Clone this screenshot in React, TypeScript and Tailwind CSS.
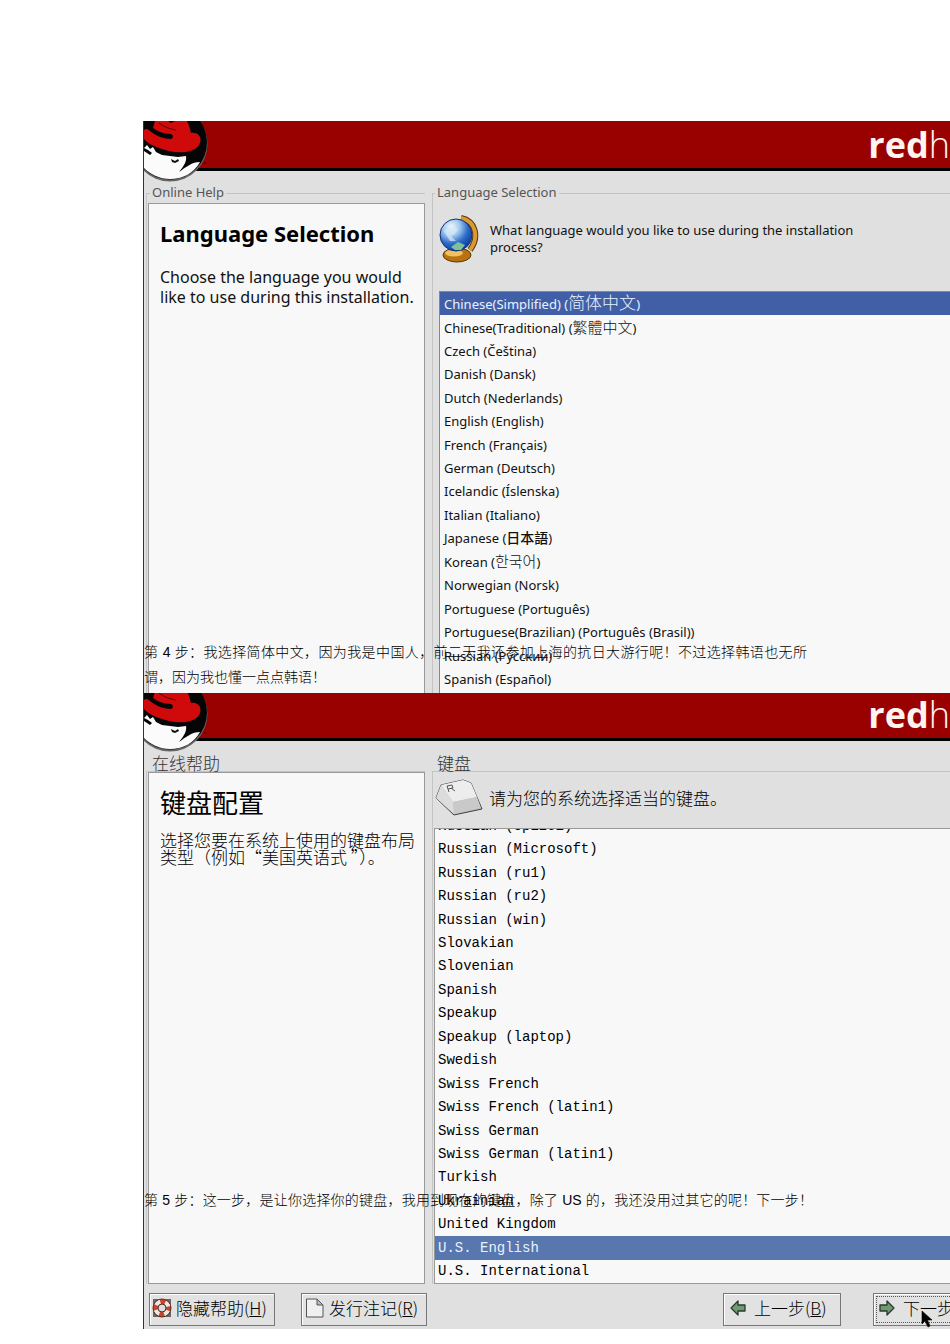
import React from "react";

const languages = [
  ["Chinese(Simplified) (", "简体中文", ")"],
  ["Chinese(Traditional) (", "繁體中文", ")"],
  ["Czech (Čeština)"],
  ["Danish (Dansk)"],
  ["Dutch (Nederlands)"],
  ["English (English)"],
  ["French (Français)"],
  ["German (Deutsch)"],
  ["Icelandic (Íslenska)"],
  ["Italian (Italiano)"],
  ["Japanese (", "日本語", ")"],
  ["Korean (", "한국어", ")"],
  ["Norwegian (Norsk)"],
  ["Portuguese (Português)"],
  ["Portuguese(Brazilian) (Português (Brasil))"],
  ["Russian (Русский)"],
  ["Spanish (Español)"],
];

const keyboards = [
  "Russian (cp1251)",
  "Russian (Microsoft)",
  "Russian (ru1)",
  "Russian (ru2)",
  "Russian (win)",
  "Slovakian",
  "Slovenian",
  "Spanish",
  "Speakup",
  "Speakup (laptop)",
  "Swedish",
  "Swiss French",
  "Swiss French (latin1)",
  "Swiss German",
  "Swiss German (latin1)",
  "Turkish",
  "Ukrainian",
  "United Kingdom",
  "U.S. English",
  "U.S. International",
];

function HatLogo() {
  return (
    <svg viewBox="0 0 66 62" className="h-[62px] w-[66px] shrink-0" aria-hidden="true">
      <circle cx="26" cy="23" r="37.500" fill="#666" />
      <circle cx="26" cy="21.500" r="37" fill="#050505" />
      <path d="M0 27 L3 24 L6 28 L9 26 L12 31 L18 34 L26 35 L34 36 L42 35 C43 40 40 45 35 51 C42 46 48 41 56 41 C50 52 39 58 26 58 C15 58 6 53 0 47Z" fill="#fbfbfb" />
      <path d="M0 27 L4 29 L8 32 L6 34 L0 30Z" fill="#050505" />
      <path d="M27 38 L31 40 L34 38 L35 40 L31 42 L28 41Z" fill="#111" />
      <path d="M0 9 C2 7 4 8 6 10 C12 15 20 18 27 18 C30 17 29 14 27 13 C20 13 13 10 9 7 L11 0 L24 0 L27 2 L31 0 L43 0 C45 4 46 8 47 12 C54 11 58 16 56 22 C53 31 38 33 25 30 C13 27 4 23 0 18Z" fill="#d00a0a" />
      <path d="M15 2 C20 6 26 8 32 9" fill="none" stroke="#5a0000" />
      <circle cx="61" cy="42" r="1" fill="#500" />
    </svg>
  );
}

function Banner() {
  return (
    <header className="flex h-full items-start justify-between border-b-[3px] border-black bg-[#990000]">
      <HatLogo />
      <div className="pt-[3px] font-['Open_Sans',sans-serif] text-[36px] leading-[42px] text-[#fff4f0]">
        <span className="font-bold">red</span>
        <span className="font-light">h</span>
      </div>
    </header>
  );
}

function Globe() {
  return (
    <svg viewBox="0 0 40 50" className="h-[50px] w-10 shrink-0" aria-hidden="true">
      <defs>
        <radialGradient id="sea" cx="0.35" cy="0.25" r="0.8">
          <stop offset="0" stopColor="#f2faff" />
          <stop offset="0.35" stopColor="#9cc6ee" />
          <stop offset="0.65" stopColor="#2d6cc8" />
          <stop offset="1" stopColor="#08389c" />
        </radialGradient>
      </defs>
      <path d="M22 4 C36 7 41 22 31 36" fill="none" stroke="#5a3505" strokeWidth="6" />
      <path d="M22 4 C36 7 41 22 31 36" fill="none" stroke="#d99a34" strokeWidth="4" />
      <ellipse cx="18" cy="41" rx="14" ry="7" fill="#b87310" stroke="#5a3505" />
      <ellipse cx="15" cy="39" rx="9" ry="3.5" fill="#f1c060" />
      <circle cx="17" cy="21" r="16" fill="url(#sea)" stroke="#12326e" />
      <path d="M5 17 L12 12 L19 15 L16 20 L12 22 L17 27 L11 27Z" fill="#d5ebf3" opacity="0.7" />
      <path d="M12 33 L19 28 L26 31 L22 36 L16 36Z" fill="#7cc296" />
    </svg>
  );
}

function KeyCap() {
  return (
    <svg viewBox="0 0 48 38" className="h-[38px] w-12 shrink-0" aria-hidden="true">
      <path d="M1 19 L6 6 L28 1 L36 4 L47 30 L19 36 Z" fill="#b5b5b5" stroke="#444" strokeLinejoin="round" />
      <path d="M6 6 L28 1 L36 4 L42 18 L18 23 Z" fill="#ededed" />
      <path d="M18 23 L42 18 L46 29 L19 35Z" fill="#c9c9c9" />
      <path d="M1 19 L6 6 L18 23 L19 35Z" fill="#dcdcdc" />
      <path d="M14 13 L12 7 L17 6 L18 9 L13 10 M16 9 L20 12" fill="none" stroke="#555" />
    </svg>
  );
}

function LifeRing() {
  return (
    <svg viewBox="0 0 20 20" className="h-5 w-5 shrink-0" aria-hidden="true">
      <path d="M1 1 H6 L10 3 L14 1 H19 V6 L17 10 L19 14 V19 H1 V14 L3 10 L1 6Z" fill="#666" />
      <circle cx="10" cy="10" r="6.5" fill="none" stroke="#f0e8e6" strokeWidth="5" />
      <circle cx="10" cy="10" r="6.5" fill="none" stroke="#c8452c" strokeWidth="5" strokeDasharray="5.1 5.1" strokeDashoffset="2.5" />
      <circle cx="10" cy="10" r="9" fill="none" stroke="#5c2a24" />
      <circle cx="10" cy="10" r="4" fill="#ddd" stroke="#4c2a24" />
    </svg>
  );
}

function Sheet() {
  return (
    <svg viewBox="0 0 20 22" className="h-[22px] w-5 shrink-0" aria-hidden="true">
      <path d="M1.500 2 H12 L18 8 V20 H1.500Z" fill="#f0f0f0" stroke="#555" strokeLinejoin="round" />
      <path d="M12 2 V8 H18Z" fill="#bbb" stroke="#555" strokeLinejoin="round" />
    </svg>
  );
}

function Arrow({ flip = false }: { flip?: boolean }) {
  return (
    <svg viewBox="0 0 16 16" className={flip ? "h-4 w-4 shrink-0 rotate-180" : "h-4 w-4 shrink-0"} aria-hidden="true">
      <path d="M1 8 L8 1 V5 H15 V11 H8 V15Z" fill="#6f9a72" stroke="#2c3a2d" strokeWidth="1.3" strokeLinejoin="round" />
    </svg>
  );
}

function Pointer() {
  return (
    <svg viewBox="0 0 12 18" className="absolute top-4 left-[47px] h-[18px] w-3" aria-hidden="true">
      <path d="M1 1 V14 L4 11 L7 17 L9 16 L6.500 10 H11Z" fill="#000" stroke="#000" strokeWidth="0.6" />
    </svg>
  );
}

const nativeStyle: Record<string, string> = {
  简体中文: "text-[17px] font-light",
  繁體中文: "text-[15px] font-light",
  日本語: "text-[14px] font-medium",
  한국어: "text-[15px] font-light",
};

const button =
  "flex h-[33px] items-center gap-1 border border-[#777] bg-[#e2e2e2] pb-1 text-[17px] leading-5 whitespace-nowrap text-black shadow-[inset_1px_1px_0_#fff]";
const caption =
  "absolute left-0 text-justify font-['Liberation_Sans','Noto_Sans_CJK_SC',sans-serif] text-[14px] leading-[25px] font-light text-black";

function LanguageScreen() {
  return (
    <section className="relative h-[572px] overflow-hidden border-l border-[#333] bg-[#e0e0e0] font-['Noto_Sans','Noto_Sans_CJK_SC',sans-serif] text-[13px] text-[#111]">
      <div className="h-[50px]">
        <Banner />
      </div>
      <div className="flex pt-[13px]">
        <div className="w-[281px] shrink-0 pl-[2px]">
          <h2 className="relative ml-1 w-fit bg-[#e0e0e0] px-[2px] leading-4 text-[#555]">Online Help</h2>
          <div className="-mt-[7px] h-[520px] border-t border-l border-[#c4c4c4] pt-[9px] pl-[1px]">
            <div className="h-full border border-[#999] bg-[#f8f8f8] px-[11px] pt-[15px]">
              <h1 className="text-[22px] leading-7 font-bold text-black">Language Selection</h1>
              <p className="pt-5 text-[16px] leading-5 whitespace-nowrap">
                Choose the language you would
                <br />
                like to use during this installation.
              </p>
            </div>
          </div>
        </div>
        <div className="min-w-0 flex-1 pl-[7px]">
          <h2 className="relative ml-[3px] w-fit bg-[#e0e0e0] px-[2px] leading-4 text-[#555]">Language Selection</h2>
          <div className="-mt-[7px] h-[520px] border-t border-l border-[#c4c4c4] pl-[6px]">
            <div className="flex h-[97px] gap-[11px] pt-[20px]">
              <Globe />
              <p className="pt-2 leading-[17px]">
                What language would you like to use during the installation
                <br />
                process?
              </p>
            </div>
            <div className="h-[410px] border-t border-l border-[#888] bg-[#f8f8f8]">
              <ul className="grid h-[399px] auto-rows-fr">
                {languages.map(([before, native, after], i) => (
                  <li key={before} className={i === 0 ? "flex items-center bg-[#415fa6] pl-1 text-[#e8f2ff]" : "flex items-center pl-1"}>
                    <span className="leading-5 whitespace-nowrap">
                      {before}
                      {native && <span className={nativeStyle[native]}>{native}</span>}
                      {after}
                    </span>
                  </li>
                ))}
              </ul>
            </div>
          </div>
        </div>
      </div>
      <p className={`${caption} top-[519px] w-[663px]`}>
        第 4 步：我选择简体中文，因为我是中国人，前二天我还参加上海的抗日大游行呢！不过选择韩语也无所谓，因为我也懂一点点韩语！
      </p>
    </section>
  );
}

function KeyboardScreen() {
  return (
    <section className="relative h-[636px] overflow-hidden border-l border-[#333] bg-[#e0e0e0] font-['Noto_Sans_CJK_SC',sans-serif] text-[17px] font-light text-black">
      <div className="-mt-[2px] h-[50px]">
        <Banner />
      </div>
      <div className="flex pt-[12px]">
        <div className="w-[281px] shrink-0 pl-[2px]">
          <h2 className="relative ml-1 w-fit px-[2px] leading-5 text-[#333]">在线帮助</h2>
          <div className="-mt-[2px] h-[513px] border-t border-l border-[#c4c4c4] pl-[1px]">
            <div className="h-full border border-[#999] bg-[#f8f8f8] px-[11px] pt-[13px]">
              <h1 className="text-[26px] leading-8 font-normal">键盘配置</h1>
              <p className="pt-[13px] leading-[17px] whitespace-nowrap">
                选择您要在系统上使用的键盘布局
                <br />
                类型（例如“美国英语式 ”）。
              </p>
            </div>
          </div>
        </div>
        <div className="min-w-0 flex-1 pl-[7px]">
          <h2 className="relative ml-[3px] w-fit px-[2px] leading-5 text-[#333]">键盘</h2>
          <div className="-mt-[2px] h-[513px] border-t border-l border-[#c4c4c4] pl-[1px]">
            <div className="flex h-[56px] items-center gap-[6px] pb-1 pl-[1px]">
              <KeyCap />
              <p className="leading-5">请为您的系统选择适当的键盘。</p>
            </div>
            <div className="flex h-[456px] flex-col justify-end overflow-hidden border-y border-l border-[#999] bg-[#f8f8f8]">
              <ul className="grid h-[469px] shrink-0 auto-rows-fr font-['Liberation_Mono',monospace] text-[14px] font-normal">
                {keyboards.map((name) => (
                  <li
                    key={name}
                    className={name === "U.S. English" ? "flex items-center bg-[#5877ae] pl-[3px] leading-5 text-[#e8f2ff]" : "flex items-center pl-[3px] leading-5"}
                  >
                    {name}
                  </li>
                ))}
              </ul>
            </div>
          </div>
        </div>
      </div>
      <div className="flex pt-[9px] pl-[5px]">
        <button className={`${button} w-[126px] pl-[2px]`}>
          <LifeRing />
          <span>
            隐藏帮助(<u>H</u>)
          </span>
        </button>
        <button className={`${button} ml-[26px] w-[126px] pl-[3px]`}>
          <Sheet />
          <span>
            发行注记(<u>R</u>)
          </span>
        </button>
        <button className={`${button} ml-auto w-[118px] pl-[6px]`}>
          <Arrow />
          <span className="pl-1">
            上一步(<u>B</u>)
          </span>
        </button>
        <button className={`${button} relative ml-8 w-[77px] border-r-0 pl-[5px]`}>
          <span className="absolute inset-[2px] right-0 border border-r-0 border-dotted border-[#555]" />
          <Arrow flip />
          <span className="pl-1">下一步</span>
          <Pointer />
        </button>
      </div>
      <p className={`${caption} top-[495px] w-[669px] [text-align-last:justify]`}>
        第 5 步：这一步，是让你选择你的键盘，我用到现在的键盘，除了 US 的，我还没用过其它的呢！下一步！
      </p>
    </section>
  );
}

export default function App() {
  return (
    <main className="overflow-hidden bg-white pt-[121px] pb-[15px] pl-[143px]">
      <LanguageScreen />
      <KeyboardScreen />
    </main>
  );
}
